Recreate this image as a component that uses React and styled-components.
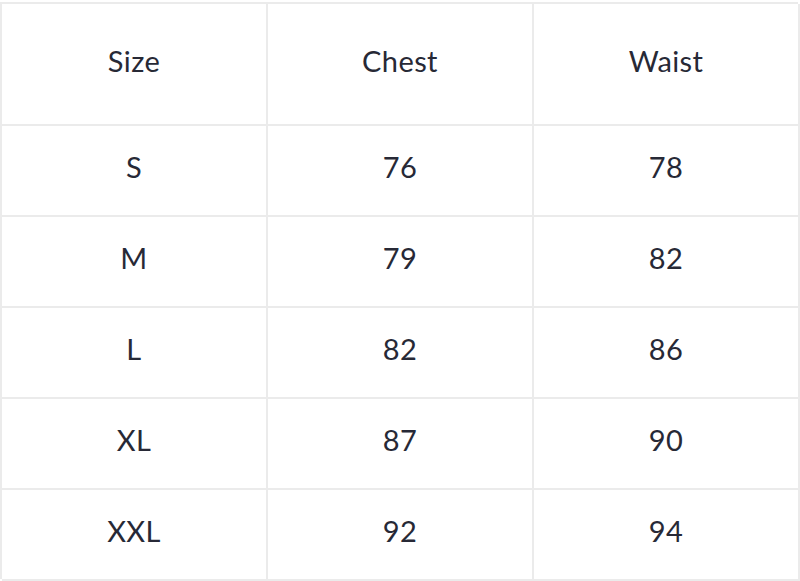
import React from 'react';
import styled, { createGlobalStyle } from 'styled-components';

const GlobalStyle = createGlobalStyle`
  html, body { margin: 0; padding: 0; background: #ffffff; }
  body { font-family: Lato, "Open Sans", sans-serif; }
`;

const Page = styled.div`
  width: 800px;
  height: 581px;
  box-sizing: border-box;
  padding: 2px 2px 2px 0;
  background: #ffffff;
`;

const Table = styled.div`
  display: grid;
  grid-template-columns: 266px 266px 266px;
  grid-template-rows: 122px repeat(5, 91px);
  border-top: 2px solid #ebebeb;
  border-left: 2px solid #ebebeb;
  box-sizing: border-box;
  width: 798px;
  height: 577px;
`;

const Cell = styled.div`
  display: flex;
  align-items: center;
  justify-content: center;
  padding-bottom: 8px;
  border-right: 2px solid #ebebeb;
  border-bottom: 2px solid #ebebeb;
  font-size: 29px;
  letter-spacing: 0.4px;
  color: #272936;
`;

const headers = ['Size', 'Chest', 'Waist'];
const rows = [
  ['S', '76', '78'],
  ['M', '79', '82'],
  ['L', '82', '86'],
  ['XL', '87', '90'],
  ['XXL', '92', '94'],
];

const App = () => {
  return (
    <Page>
      <GlobalStyle />
      <Table>
        {headers.map((h) => (
          <Cell key={h}>{h}</Cell>
        ))}
        {rows.map((r) =>
          r.map((v, i) => <Cell key={r[0] + i}>{v}</Cell>)
        )}
      </Table>
    </Page>
  );
};

export default App;
